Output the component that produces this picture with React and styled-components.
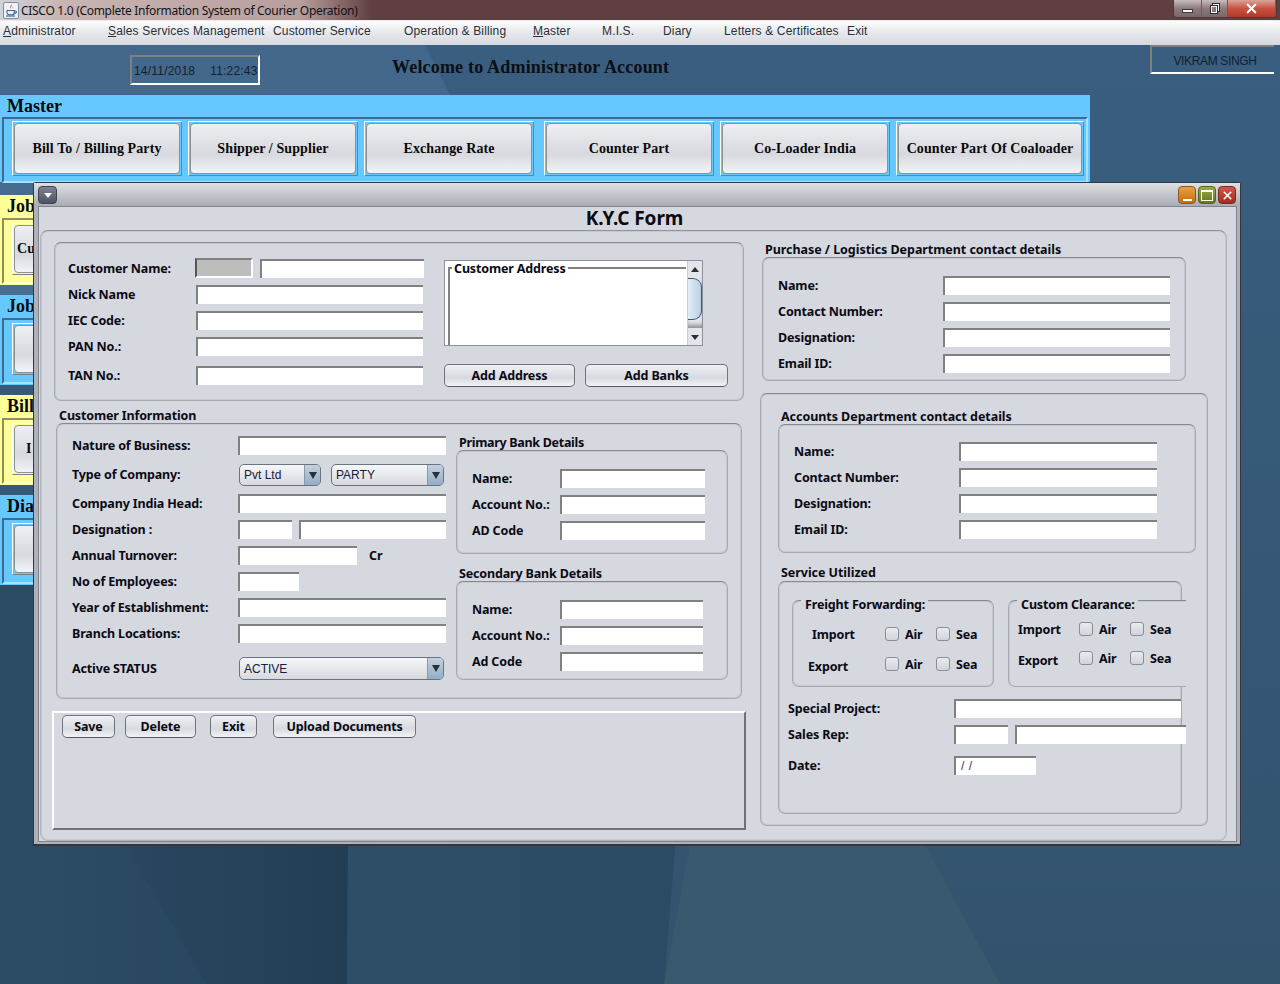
import React from "react";
import styled, { createGlobalStyle } from "styled-components";
import { X } from "lucide-react";

const FORM_FONT = `"Noto Sans", "Liberation Sans", sans-serif`;
const PLAIN_FONT = `"Liberation Sans", Arial, sans-serif`;
const SERIF_FONT = `"Liberation Serif", "Times New Roman", serif`;

const GlobalStyle = createGlobalStyle`
  html, body { margin: 0; padding: 0; height: 984px; overflow: hidden; background: #3b5f82; }
  * { box-sizing: border-box; }
`;

const Screen = styled.div`
  width: 1280px;
  height: 984px;
  display: flex;
  flex-direction: column;
  overflow: hidden;
`;

/* native window chrome */
const TitleBar = styled.div`
  height: 21px;
  flex: none;
  display: flex;
  align-items: flex-start;
  padding-left: 3px;
  border-bottom: 1px solid #efe9e9;
  background: linear-gradient(90deg, #cfd3d8 0, #c9b5b3 60px, #b89f9e 300px, #7d5c5e 350px, #5f3f42 372px, #5f3f42 100%);
`;
const TitleText = styled.span`
  margin: 2px 0 0 2px;
  font: 12px/17px ${FORM_FONT};
  color: #10131a;
  letter-spacing: -0.3px;
  white-space: nowrap;
`;
const WinControls = styled.div`
  margin-left: auto;
  margin-right: 3px;
  width: 104px;
  height: 18px;
  display: flex;
  border: 1px solid #4b3a3d;
  border-top: none;
  border-radius: 0 0 4px 4px;
  overflow: hidden;
`;
const WinButton = styled.div`
  width: ${(p) => p.$w}px;
  display: flex;
  align-items: center;
  justify-content: center;
  border-right: 1px solid #6c5a5c;
  background: ${(p) =>
    p.$close
      ? "linear-gradient(#d9a49b, #c9523f 50%, #b23a2b)"
      : "linear-gradient(#c6bcbc, #8e7a7b 50%, #75686a)"};
`;
const MinGlyph = styled.span`
  width: 11px;
  height: 4px;
  margin-top: 5px;
  background: #f4f4f4;
  border: 1px solid #3a3a3a;
`;

const MenuBar = styled.div`
  height: 24px;
  flex: none;
  display: grid;
  grid-template-columns: 105px 165px 131px 129px 69px 61px 61px 123px auto;
  align-items: start;
  padding: 3px 0 0 3px;
  background: linear-gradient(#fdfdfe 0, #e6e8ec 50%, #d5d8de 100%);
  font: 12px/15px ${PLAIN_FONT};
  letter-spacing: 0.15px;
  color: #2a2f38;
`;

const Desktop = styled.div`
  position: relative;
  flex: 1;
`;
const Wallpaper = styled.svg`
  position: absolute;
  left: 0;
  top: 0;
`;
const DesktopFlow = styled.div`
  position: relative;
  display: flex;
  flex-direction: column;
`;
const HeaderRow = styled.div`
  height: 50px;
  display: flex;
  align-items: flex-start;
`;
const DateBox = styled.div`
  width: 130px;
  height: 30px;
  margin: 10px 0 0 130px;
  padding: 7px 0 0 2px;
  display: flex;
  gap: 15px;
  border: 2px solid #fff;
  border-top-color: #808080;
  border-left-color: #808080;
  font: 12px/15px ${PLAIN_FONT};
  letter-spacing: 0.2px;
  color: #16212d;
  white-space: nowrap;
`;
const Welcome = styled.div`
  margin: 12px 0 0 132px;
  font: bold 18px/20px ${SERIF_FONT};
  letter-spacing: 0.19px;
  color: #0c0f14;
`;
const UserBox = styled.div`
  width: 124px;
  height: 29px;
  margin: 0 6px 0 auto;
  padding: 7px 0 0 4px;
  text-align: center;
  border-top: 2px solid #808080;
  border-left: 2px solid #808080;
  border-bottom: 2px solid #fff;
  font: 12px/15px ${PLAIN_FONT};
  letter-spacing: -0.35px;
  color: #13202c;
`;

/* shortcut groups behind the form */
const Group = styled.div`
  width: 1090px;
  height: ${(p) => p.$h}px;
  margin-bottom: ${(p) => p.$mb}px;
  background: ${(p) => p.$bg};
`;
const GroupTitle = styled.div`
  height: 22px;
  padding: 1px 0 0 7px;
  font: bold 18px/21px ${SERIF_FONT};
  color: #0a0a0a;
`;
const GroupFrame = styled.div`
  display: flex;
  margin: ${(p) => p.$mt || 0}px 2px 0 2px;
  height: 66px;
  padding: ${(p) => p.$pt}px 0 0 8px;
  border: 2px solid ${(p) => p.$edge};
  border-right-color: ${(p) => p.$light};
  border-bottom-color: ${(p) => p.$light};
`;
const NavButton = styled.div`
  width: ${(p) => p.$w}px;
  height: ${(p) => p.$h || 55}px;
  margin-left: ${(p) => p.$ml || 0}px;
  flex: none;
  padding: 1px;
  border: 1px solid;
  border-color: #fff #7b7f87 #7b7f87 #fff;
`;
const NavFace = styled.div`
  height: 100%;
  display: flex;
  align-items: center;
  justify-content: ${(p) => (p.$pl ? "flex-start" : "center")};
  padding-left: ${(p) => p.$pl || 0}px;
  border: 1px solid #8c9097;
  border-radius: 4px;
  background: linear-gradient(#eeeff2, #d7d9df 62%, #f3f4f6);
  font: bold 14px/16px ${SERIF_FONT};
  letter-spacing: 0.1px;
  color: #0a0a0a;
  white-space: nowrap;
`;

/* internal frame */
const FormWindow = styled.div`
  position: absolute;
  left: 33px;
  top: 137px;
  width: 1208px;
  height: 664px;
  display: flex;
  flex-direction: column;
  padding: 0 3px 2px 4px;
  border: 1px solid #33373e;
  border-bottom-width: 2px;
  border-radius: 3px 3px 0 0;
  background: #aeb1ba;
`;
const FrameBar = styled.div`
  height: 23px;
  flex: none;
  margin: 0 -3px 0 -4px;
  padding: 3px 4px 0 4px;
  display: flex;
  background: linear-gradient(#dfe0e3, #a9acb6);
`;
const FrameMenu = styled.div`
  width: 19px;
  height: 18px;
  display: flex;
  align-items: center;
  justify-content: center;
  border: 1px solid #3f4450;
  border-radius: 4px;
  background: linear-gradient(#7d8393, #4d5362);
`;
const FrameControls = styled.div`
  margin-left: auto;
  display: flex;
  gap: 2px;
`;
const FrameControl = styled.div`
  width: 18px;
  height: 18px;
  display: flex;
  align-items: center;
  justify-content: center;
  border: 1px solid ${(p) => p.$edge};
  border-radius: 4px;
  background: ${(p) => p.$bg};
`;
const FrameBody = styled.div`
  flex: 1;
  min-height: 0;
  display: flex;
  flex-direction: column;
  border: 1px solid #7f838c;
  background: #d5d8df;
`;
const FormTitle = styled.div`
  height: 23px;
  flex: none;
  padding-right: 6px;
  text-align: center;
  font: bold 19px/22px ${FORM_FONT};
  letter-spacing: -0.1px;
  color: #0a0a12;
`;
const FormOuter = styled.div`
  height: 611px;
  width: 1187px;
  margin-left: 1px;
  flex: none;
  display: flex;
  padding: 11px 0 0 11px;
  border: 1px solid #b1b4bc;
  border-top-color: #8f929a;
  border-radius: 8px;
  box-shadow: inset 0 0 0 1px #c6c9d0;
`;
const LeftColumn = styled.div`
  width: 694px;
  flex: none;
  display: flex;
  flex-direction: column;
`;
const RightColumn = styled.div`
  margin-left: 14px;
  padding-top: 1px;
  display: flex;
  flex-direction: column;
`;
const Panel = styled.div`
  width: ${(p) => p.$w}px;
  height: ${(p) => p.$h}px;
  margin-left: ${(p) => p.$ml || 0}px;
  margin-top: ${(p) => p.$mt || 0}px;
  padding: ${(p) => p.$pt || 0}px 0 0 ${(p) => p.$pl || 0}px;
  flex: none;
  border: 1px solid #a6a9b1;
  border-top-color: #85888f;
  border-radius: 7px;
  box-shadow: inset 0 0 0 1px #c6c9d0;
`;
const Split = styled.div`
  display: flex;
  align-items: flex-start;
`;
const Stack = styled.div`
  display: flex;
  flex-direction: column;
  flex: none;
  width: ${(p) => (p.$w ? `${p.$w}px` : "auto")};
  margin-left: ${(p) => p.$ml || 0}px;
  margin-top: ${(p) => p.$mt || 0}px;
`;
const Caption = styled.div`
  height: 14px;
  margin-left: ${(p) => p.$ml || 0}px;
  margin-top: ${(p) => p.$mt || 0}px;
  font: bold 12.5px/14px ${FORM_FONT};
  letter-spacing: ${(p) => p.$ls ?? -0.05}px;
  color: #0a0a14;
  white-space: nowrap;
`;
const Row = styled.div`
  display: flex;
  align-items: center;
  flex: none;
  height: ${(p) => p.$h || 19}px;
  margin-top: ${(p) => p.$mt ?? 7}px;
`;
const Label = styled.div`
  width: ${(p) => p.$w}px;
  flex: none;
  margin-bottom: ${(p) => p.$up || 0}px;
  font: bold 12.5px/15px ${FORM_FONT};
  letter-spacing: -0.15px;
  color: #0a0a14;
  white-space: nowrap;
`;
const Field = styled.input`
  display: block;
  width: ${(p) => p.$w}px;
  height: 19px;
  margin-left: ${(p) => p.$ml || 0}px;
  padding: 0 0 2px 5px;
  flex: none;
  border: none;
  border-top: 2px solid #808080;
  border-left: 2px solid #808080;
  border-radius: 0;
  outline: none;
  background: #fff;
  font: 12px ${PLAIN_FONT};
  word-spacing: 1px;
  color: #2a3a60;
`;
const LockedField = styled.div`
  width: 58px;
  height: 20px;
  margin-left: -1px;
  flex: none;
  background: #bdbdbd;
  border: 2px solid #fff;
  border-top-color: #808080;
  border-left-color: #555;
`;
const UnitText = styled.span`
  margin-left: 12px;
  font: bold 12.5px/15px ${FORM_FONT};
  color: #0a0a14;
`;

const Combo = styled.div`
  width: ${(p) => p.$w}px;
  height: ${(p) => p.$h || 22}px;
  margin-left: ${(p) => p.$ml}px;
  flex: none;
  display: flex;
  align-items: center;
  overflow: hidden;
  border: 1px solid #697482;
  border-radius: 5px;
  background: linear-gradient(#f6f7f8, #d6d9de);
  font: 12px/15px ${PLAIN_FONT};
  color: #14203a;
`;
const ComboText = styled.span`
  flex: 1;
  padding-left: 4px;
  padding-top: ${(p) => p.$pt || 0}px;
`;
const ComboArrow = styled.span`
  width: 16px;
  height: 100%;
  display: flex;
  align-items: center;
  justify-content: center;
  border-left: 1px solid #8a98a8;
  background: linear-gradient(#c3d1df, #93adc6);
`;
const Triangle = styled.span`
  width: 0;
  height: 0;
  border-left: ${(p) => p.$s || 4}px solid transparent;
  border-right: ${(p) => p.$s || 4}px solid transparent;
  ${(p) => (p.$up ? "border-bottom" : "border-top")}: ${(p) => (p.$s ? p.$s + 1 : 7)}px solid ${(p) => p.$c || "#2b2f36"};
`;

const PushButton = styled.button`
  width: ${(p) => p.$w}px;
  height: 23px;
  margin-left: ${(p) => p.$ml || 0}px;
  padding: 0;
  flex: none;
  border: 1px solid #6f737b;
  border-bottom-color: #565a62;
  border-radius: 5px;
  background: linear-gradient(#f0f1f4, #d6d9df 60%, #f2f3f6);
  font: bold 12.5px/15px ${FORM_FONT};
  letter-spacing: -0.15px;
  color: #0a0a14;
`;
const ButtonRow = styled.div`
  display: flex;
  margin-top: ${(p) => p.$mt || 0}px;
`;
const ActionPanel = styled.div`
  width: 694px;
  height: 119px;
  margin-top: 12px;
  padding: 2px 0 0 8px;
  border: 2px solid #fff;
  border-right-color: #6d7078;
  border-bottom-color: #6d7078;
`;

/* address list with its titled border */
const AddressBox = styled.div`
  width: 259px;
  height: 86px;
  display: flex;
  border: 1px solid #8d9199;
  background: #fff;
`;
const AddressArea = styled.div`
  position: relative;
  flex: 1;
  margin: 6px 1px 0 3px;
  border-top: 2px solid #808080;
  border-left: 2px solid #808080;
`;
const AddressLegend = styled.span`
  position: absolute;
  left: 2px;
  top: -8px;
  padding: 0 2px;
  background: #fff;
  font: bold 12.5px/15px ${FORM_FONT};
  letter-spacing: -0.15px;
  color: #0a0a14;
  white-space: nowrap;
`;
const ScrollBar = styled.div`
  width: 15px;
  flex: none;
  display: flex;
  flex-direction: column;
  background: #e3e5e9;
  border-left: 1px solid #c9ccd2;
`;
const ScrollArrow = styled.div`
  height: 16px;
  flex: none;
  display: flex;
  align-items: center;
  justify-content: center;
`;
const ScrollTrack = styled.div`
  flex: 1;
  padding-bottom: 5px;
  box-shadow: inset 0 -5px 4px -2px #8c9097;
  margin-bottom: 1px;
`;
const ScrollThumb = styled.div`
  height: 42px;
  margin-top: 1px;
  border: 1px solid #3f5871;
  border-left: none;
  border-radius: 0 9px 9px 0;
  background: linear-gradient(90deg, #e4edf5, #b9d0e3);
`;

/* check box groups */
const CheckGroup = styled.div`
  position: relative;
  width: ${(p) => p.$w}px;
  height: 87px;
  margin-left: ${(p) => p.$ml}px;
  flex: none;
  padding-top: ${(p) => p.$pt}px;
  border: 1px solid #a6a9b1;
  border-top-color: #85888f;
  border-radius: ${(p) => (p.$open ? "7px 0 0 7px" : "7px")};
  border-right-width: ${(p) => (p.$open ? 0 : 1)}px;
  background: #d5d8df;
  box-shadow: ${(p) => (p.$open ? "inset 1px 1px 0 #c6c9d0" : "inset 0 0 0 1px #c6c9d0")};
`;
const GroupLegend = styled.span`
  position: absolute;
  left: 8px;
  top: -4px;
  padding: 0 3px 0 4px;
  background: #d5d8df;
  font: bold 12.5px/15px ${FORM_FONT};
  letter-spacing: -0.15px;
  color: #0a0a14;
  white-space: nowrap;
`;
const CheckRow = styled.div`
  height: 14px;
  display: flex;
  align-items: center;
  margin-top: ${(p) => p.$mt || 0}px;
`;
const CheckLabel = styled(Label)`
  width: ${(p) => p.$w}px;
  margin-left: ${(p) => p.$ml}px;
  margin-top: ${(p) => p.$dy || 0}px;
`;
const CheckItem = styled.label`
  width: 51px;
  flex: none;
  display: flex;
  align-items: center;
  gap: 6px;
  font: bold 12.5px/15px ${FORM_FONT};
  letter-spacing: -0.15px;
  color: #0a0a14;
`;
const CheckBox = styled.input.attrs({ type: "checkbox" })`
  appearance: none;
  width: 14px;
  height: 14px;
  margin: 0;
  flex: none;
  border: 1px solid #8a8d95;
  border-radius: 3px;
  background: linear-gradient(#e9ebee, #d0d3d9);
`;
const MinGlyphSmall = styled.span`
  width: 9px;
  height: 2px;
  margin-top: 9px;
  background: #fff;
`;
const MaxGlyph = styled.span`
  width: 12px;
  height: 11px;
  border: 1px solid #fff;
  border-top-width: 2px;
`;

const JavaIcon = () => (
  <svg width="16" height="17" viewBox="0 0 16 17" style={{ marginTop: 2 }}>
    <rect x="0.5" y="0.5" width="15" height="16" rx="1.5" fill="#eef2f6" stroke="#7f8ea3" />
    <path d="M8.5 2c1.5 1.6-1.6 2.6-.6 4.6.5 1-1.8-1-.4-2.6.6-.7 1.2-1.2 1-2z" fill="#d9622b" />
    <path d="M10 4.5c.4 1-1.2 1.5-.9 2.4-.9-.9.6-1.6.9-2.4z" fill="#e08a3c" />
    <path d="M4 8.500h7.200v2.200c0 1.200-1 2-2.200 2H6.200c-1.200 0-2.200-.8-2.200-2zM11.200 9h1.300c1.200 0 1.200 2.100-.4 2.400l-1 .2" fill="none" stroke="#3e6a9e" strokeWidth="1.1" />
    <path d="M3 14h9" stroke="#3e6a9e" strokeWidth="1.2" />
  </svg>
);

const RestoreIcon = () => (
  <svg width="13" height="13" viewBox="0 0 13 13">
    <rect x="4.5" y="1.5" width="7" height="8" fill="none" stroke="#2e2a2b" strokeWidth="1" />
    <rect x="5.5" y="2.5" width="5" height="6" fill="none" stroke="#f2f2f2" strokeWidth="1" />
    <rect x="2.5" y="3.5" width="7" height="8" fill="#8e7a7b" stroke="#2e2a2b" strokeWidth="1" />
    <rect x="3.5" y="4.5" width="5" height="6" fill="none" stroke="#f2f2f2" strokeWidth="1" />
  </svg>
);

const WallpaperArt = () => (
  <Wallpaper width="1280" height="939" viewBox="0 0 1280 939">
    <defs>
      <linearGradient id="wallBase" x1="0" y1="0" x2="0" y2="1">
        <stop offset="0" stopColor="#3a5e80" />
        <stop offset="1" stopColor="#33536d" />
      </linearGradient>
      <linearGradient id="wallTop" x1="0" y1="0" x2="0" y2="1">
        <stop offset="0" stopColor="#42678a" />
        <stop offset="1" stopColor="#487092" />
      </linearGradient>
      <linearGradient id="wallLow" x1="0" y1="0" x2="1" y2="0">
        <stop offset="0" stopColor="#32526d" />
        <stop offset="1" stopColor="#2b4a63" />
      </linearGradient>
      <linearGradient id="wallDark" x1="0" y1="0" x2="1" y2="0">
        <stop offset="0" stopColor="#2c4c66" />
        <stop offset="1" stopColor="#223e55" />
      </linearGradient>
    </defs>
    <rect width="1280" height="939" fill="url(#wallBase)" />
    <polygon points="0,0 425,0 450,50 450,300 0,300" fill="url(#wallTop)" />
    <polygon points="0,500 700,500 664,939 0,939" fill="url(#wallLow)" />
    <polygon points="0,500 350,500 347,939 0,939" fill="url(#wallDark)" />
    <polygon points="690,800 925,800 1000,939 664,939" fill="#39596f" />
    <polygon points="0,800 125,800 207,939 0,939" fill="#2e4e67" opacity="0.35" />
  </Wallpaper>
);

const menuItems = [
  ["A", "dministrator"],
  ["S", "ales Services Management"],
  ["", "Customer Service"],
  ["", "Operation & Billing"],
  ["M", "aster"],
  ["", "M.I.S."],
  ["", "Diary"],
  ["", "Letters & Certificates"],
  ["", "Exit"],
];

const masterButtons = [
  ["Bill To / Billing Party", 170, 0],
  ["Shipper / Supplier", 170, 6],
  ["Exchange Rate", 170, 6],
  ["Counter Part", 170, 10],
  ["Co-Loader India", 170, 6],
  ["Counter Part Of Coaloader", 188, 6],
];

const shortcutGroups = [
  { title: "Job", bg: "#ffff99", edge: "#8f8f5e", light: "#ffffd0", label: "Cu", pl: 2 },
  { title: "Job", bg: "#66c8ff", edge: "#3f6b8f", light: "#a6e2ff", label: "", pl: 0 },
  { title: "Bill", bg: "#ffff99", edge: "#8f8f5e", light: "#ffffd0", label: "I", pl: 11 },
  { title: "Dia", bg: "#66c8ff", edge: "#3f6b8f", light: "#a6e2ff", label: "", pl: 0 },
];

const ContactRows = ({ labelWidth, fieldWidth }) =>
  ["Name:", "Contact Number:", "Designation:", "Email ID:"].map((text, i) => (
    <Row key={text} $mt={i === 0 ? 0 : 7}>
      <Label $w={labelWidth}>{text}</Label>
      <Field $w={fieldWidth} />
    </Row>
  ));

const BankRows = ({ third, fieldWidth }) =>
  ["Name:", "Account No.:", third].map((text, i) => (
    <Row key={text} $mt={i === 0 ? 0 : 7}>
      <Label $w={88}>{text}</Label>
      <Field $w={fieldWidth} />
    </Row>
  ));

const Checks = () => (
  <>
    <CheckItem>
      <CheckBox />
      Air
    </CheckItem>
    <CheckItem>
      <CheckBox />
      Sea
    </CheckItem>
  </>
);

const App = () => {
  return (
    <Screen>
      <GlobalStyle />
      <TitleBar>
        <JavaIcon />
        <TitleText>CISCO 1.0 (Complete Information System of Courier Operation)</TitleText>
        <WinControls>
          <WinButton $w={29}>
            <MinGlyph />
          </WinButton>
          <WinButton $w={26}>
            <RestoreIcon />
          </WinButton>
          <WinButton $w={49} $close>
            <X size={15} color="#fff" strokeWidth={3.4} />
          </WinButton>
        </WinControls>
      </TitleBar>
      <MenuBar>
        {menuItems.map(([key, rest]) => (
          <span key={key + rest}>
            {key && <u>{key}</u>}
            {rest}
          </span>
        ))}
      </MenuBar>

      <Desktop>
        <WallpaperArt />
        <DesktopFlow>
          <HeaderRow>
            <DateBox>
              <span>14/11/2018</span>
              <span>11:22:43</span>
            </DateBox>
            <Welcome>Welcome to Administrator Account</Welcome>
            <UserBox>VIKRAM SINGH</UserBox>
          </HeaderRow>

          <Group $h={87} $mb={13} $bg="#66c8ff">
            <GroupTitle>Master</GroupTitle>
            <GroupFrame $pt={2} $edge="#3f6b8f" $light="#a6e2ff">
              {masterButtons.map(([label, w, ml]) => (
                <NavButton key={label} $w={w} $ml={ml}>
                  <NavFace>{label}</NavFace>
                </NavButton>
              ))}
            </GroupFrame>
          </Group>

          {shortcutGroups.map((g, i) => (
            <Group key={i} $h={90} $mb={10} $bg={g.bg}>
              <GroupTitle>{g.title}</GroupTitle>
              <GroupFrame $mt={1} $pt={3} $edge={g.edge} $light={g.light}>
                <NavButton $w={170} $h={52}>
                  <NavFace $pl={g.pl}>{g.label}</NavFace>
                </NavButton>
              </GroupFrame>
            </Group>
          ))}
        </DesktopFlow>

        <FormWindow>
          <FrameBar>
            <FrameMenu>
              <Triangle $s={4} $c="#f4f5f7" />
            </FrameMenu>
            <FrameControls>
              <FrameControl $edge="#8a5a1c" $bg="linear-gradient(#e8a046, #c66d10)">
                <MinGlyphSmall />
              </FrameControl>
              <FrameControl $edge="#55651f" $bg="linear-gradient(#9cae4a, #63761a)">
                <MaxGlyph />
              </FrameControl>
              <FrameControl $edge="#7c2a20" $bg="linear-gradient(#d0584a, #a82a1e)">
                <X size={13} color="#fff" strokeWidth={3} />
              </FrameControl>
            </FrameControls>
          </FrameBar>

          <FrameBody>
            <FormTitle>K.Y.C Form</FormTitle>
            <FormOuter>
              <LeftColumn>
                <Panel $w={690} $h={159} $ml={2} $pt={15} $pl={13}>
                  <Split>
                    <Stack $w={356}>
                      <Row $h={20} $mt={0}>
                        <Label $w={128}>Customer Name:</Label>
                        <LockedField />
                        <Field $w={164} $ml={7} />
                      </Row>
                      <Row>
                        <Label $w={128}>Nick Name</Label>
                        <Field $w={227} />
                      </Row>
                      <Row>
                        <Label $w={128}>IEC Code:</Label>
                        <Field $w={227} />
                      </Row>
                      <Row>
                        <Label $w={128}>PAN No.:</Label>
                        <Field $w={227} />
                      </Row>
                      <Row $mt={10}>
                        <Label $w={128}>TAN No.:</Label>
                        <Field $w={227} />
                      </Row>
                    </Stack>
                    <Stack $ml={20} $mt={2}>
                      <AddressBox>
                        <AddressArea>
                          <AddressLegend>Customer Address</AddressLegend>
                        </AddressArea>
                        <ScrollBar>
                          <ScrollArrow>
                            <Triangle $up $s={4} />
                          </ScrollArrow>
                          <ScrollTrack>
                            <ScrollThumb />
                          </ScrollTrack>
                          <ScrollArrow>
                            <Triangle $s={4} />
                          </ScrollArrow>
                        </ScrollBar>
                      </AddressBox>
                      <ButtonRow $mt={18}>
                        <PushButton $w={131}>Add Address</PushButton>
                        <PushButton $w={143} $ml={10}>
                          Add Banks
                        </PushButton>
                      </ButtonRow>
                    </Stack>
                  </Split>
                </Panel>

                <Caption $ml={7} $mt={8} $ls={-0.15}>
                  Customer Information
                </Caption>
                <Panel $w={686} $h={276} $ml={4} $pt={12} $pl={15}>
                  <Split>
                    <Stack $w={374}>
                      <Row $mt={0}>
                        <Label $w={166}>Nature of Business:</Label>
                        <Field $w={208} />
                      </Row>
                      <Row $h={22} $mt={9}>
                        <Label $w={166} $up={2}>Type of Company:</Label>
                        <Combo $w={82} $ml={1}>
                          <ComboText>Pvt Ltd</ComboText>
                          <ComboArrow>
                            <Triangle />
                          </ComboArrow>
                        </Combo>
                        <Combo $w={113} $ml={10}>
                          <ComboText>PARTY</ComboText>
                          <ComboArrow>
                            <Triangle />
                          </ComboArrow>
                        </Combo>
                      </Row>
                      <Row $mt={8}>
                        <Label $w={166}>Company India Head:</Label>
                        <Field $w={208} />
                      </Row>
                      <Row>
                        <Label $w={166}>Designation :</Label>
                        <Field $w={54} />
                        <Field $w={147} $ml={7} />
                      </Row>
                      <Row>
                        <Label $w={166}>Annual Turnover:</Label>
                        <Field $w={119} />
                        <UnitText>Cr</UnitText>
                      </Row>
                      <Row>
                        <Label $w={166}>No of Employees:</Label>
                        <Field $w={61} />
                      </Row>
                      <Row>
                        <Label $w={166}>Year of Establishment:</Label>
                        <Field $w={208} />
                      </Row>
                      <Row>
                        <Label $w={166}>Branch Locations:</Label>
                        <Field $w={208} />
                      </Row>
                      <Row $h={23} $mt={14}>
                        <Label $w={166}>Active STATUS</Label>
                        <Combo $w={205} $h={23} $ml={1}>
                          <ComboText $pt={2}>ACTIVE</ComboText>
                          <ComboArrow>
                            <Triangle />
                          </ComboArrow>
                        </Combo>
                      </Row>
                    </Stack>
                    <Stack $ml={10}>
                      <Caption $ml={3} $ls={-0.3}>Primary Bank Details</Caption>
                      <Panel $w={272} $h={104} $pt={18} $pl={15}>
                        <BankRows third="AD Code" fieldWidth={145} />
                      </Panel>
                      <Caption $ml={3} $mt={13} $ls={-0.15}>
                        Secondary Bank Details
                      </Caption>
                      <Panel $w={272} $h={99} $pt={18} $pl={15}>
                        <BankRows third="Ad Code" fieldWidth={143} />
                      </Panel>
                    </Stack>
                  </Split>
                </Panel>

                <ActionPanel>
                  <ButtonRow>
                    <PushButton $w={53}>Save</PushButton>
                    <PushButton $w={71} $ml={10}>
                      Delete
                    </PushButton>
                    <PushButton $w={47} $ml={14}>
                      Exit
                    </PushButton>
                    <PushButton $w={143} $ml={16}>
                      Upload Documents
                    </PushButton>
                  </ButtonRow>
                </ActionPanel>
              </LeftColumn>

              <RightColumn>
                <Caption $ml={5}>Purchase / Logistics Department contact details</Caption>
                <Panel $w={424} $h={124} $ml={2} $pt={18} $pl={15}>
                  <ContactRows labelWidth={165} fieldWidth={227} />
                </Panel>

                <Panel $w={448} $h={433} $mt={12} $pt={16} $pl={20}>
                  <Caption>Accounts Department contact details</Caption>
                  <Panel $w={418} $h={129} $ml={-3} $pt={17} $pl={15}>
                    <ContactRows labelWidth={165} fieldWidth={198} />
                  </Panel>
                  <Caption $mt={13}>Service Utilized</Caption>
                  <Panel $w={404} $h={233} $ml={-3} $mt={1} $pt={18} $pl={9}>
                    <Split>
                      <CheckGroup $w={202} $ml={4} $pt={26}>
                        <GroupLegend>Freight Forwarding:</GroupLegend>
                        <CheckRow>
                          <CheckLabel $w={73} $ml={19}>Import</CheckLabel>
                          <Checks />
                        </CheckRow>
                        <CheckRow $mt={16}>
                          <CheckLabel $w={77} $ml={15} $dy={4}>Export</CheckLabel>
                          <Checks />
                        </CheckRow>
                      </CheckGroup>
                      <CheckGroup $w={178} $ml={14} $pt={21} $open>
                        <GroupLegend>Custom Clearance:</GroupLegend>
                        <CheckRow>
                          <CheckLabel $w={61} $ml={9}>Import</CheckLabel>
                          <Checks />
                        </CheckRow>
                        <CheckRow $mt={15}>
                          <CheckLabel $w={61} $ml={9} $dy={4}>Export</CheckLabel>
                          <Checks />
                        </CheckRow>
                      </CheckGroup>
                    </Split>
                    <Row $mt={12}>
                      <Label $w={166}>Special Project:</Label>
                      <Field $w={227} />
                    </Row>
                    <Row>
                      <Label $w={166}>Sales Rep:</Label>
                      <Field $w={54} />
                      <Field $w={171} $ml={7} />
                    </Row>
                    <Row $mt={12}>
                      <Label $w={166}>Date:</Label>
                      <Field $w={82} defaultValue="/ /" />
                    </Row>
                  </Panel>
                </Panel>
              </RightColumn>
            </FormOuter>
          </FrameBody>
        </FormWindow>
      </Desktop>
    </Screen>
  );
};

export default App;
